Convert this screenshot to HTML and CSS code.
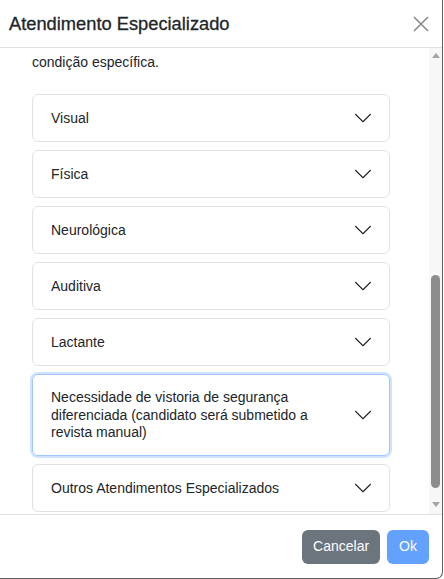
FILE: index.html
```html
<!DOCTYPE html>
<html lang="pt-BR">
<head>
<meta charset="utf-8">
<title>Atendimento Especializado</title>
<link rel="stylesheet" href="styles.css">
</head>
<body>
<div class="modal">
  <header class="modal-header">
    <h5 class="modal-title">Atendimento Especializado</h5>
    <button class="btn-close" type="button" aria-label="Fechar">
      <svg viewBox="0 0 16 16" width="16" height="16"><path d="M1 1L15 15M15 1L1 15" stroke="#212529" stroke-width="1.5" fill="none"/></svg>
    </button>
  </header>
  <div class="modal-main">
    <div class="modal-body">
      <p class="intro">condição específica.</p>
      <div class="accordion">
        <div class="acc-item"><span class="acc-label">Visual</span><svg class="chev" viewBox="0 0 16 16"><path d="M2 5L8 11L14 5"/></svg></div>
        <div class="acc-item"><span class="acc-label">Física</span><svg class="chev" viewBox="0 0 16 16"><path d="M2 5L8 11L14 5"/></svg></div>
        <div class="acc-item"><span class="acc-label">Neurológica</span><svg class="chev" viewBox="0 0 16 16"><path d="M2 5L8 11L14 5"/></svg></div>
        <div class="acc-item"><span class="acc-label">Auditiva</span><svg class="chev" viewBox="0 0 16 16"><path d="M2 5L8 11L14 5"/></svg></div>
        <div class="acc-item"><span class="acc-label">Lactante</span><svg class="chev" viewBox="0 0 16 16"><path d="M2 5L8 11L14 5"/></svg></div>
        <div class="acc-item focused"><span class="acc-label">Necessidade de vistoria de segurança diferenciada (candidato será submetido a revista manual)</span><svg class="chev" viewBox="0 0 16 16"><path d="M2 5L8 11L14 5"/></svg></div>
        <div class="acc-item"><span class="acc-label">Outros Atendimentos Especializados</span><svg class="chev" viewBox="0 0 16 16"><path d="M2 5L8 11L14 5"/></svg></div>
      </div>
    </div>
    <div class="scrollbar">
      <span class="sb-arrow up"></span>
      <div class="sb-track"><div class="sb-thumb"></div></div>
      <span class="sb-arrow down"></span>
    </div>
  </div>
  <footer class="modal-footer">
    <button class="btn btn-secondary" type="button">Cancelar</button>
    <button class="btn btn-primary" type="button" disabled>Ok</button>
  </footer>
</div>
</body>
</html>
```

FILE: styles.css
```css
* { box-sizing: border-box; }
html, body { margin: 0; padding: 0; background: #fff; }
body {
  font-family: "Liberation Sans", Arial, sans-serif;
  color: #212529;
  font-size: 14px;
  line-height: 17.33px;
}
.modal {
  width: 443px;
  height: 579px;
  display: flex;
  flex-direction: column;
  border-right: 1px solid #5f5f5f;
  border-bottom: 1px solid #5f5f5f;
  border-bottom-right-radius: 7px;
  overflow: hidden;
  background: #fff;
}
.modal-header {
  height: 48px;
  flex: none;
  display: flex;
  align-items: center;
  justify-content: space-between;
  padding: 0 13px 0 9px;
  border-bottom: 1px solid #dee2e6;
}
.modal-title {
  margin: 0;
  font-size: 18.3px;
  font-weight: 400;
  line-height: 1.2;
  color: #212529;
  -webkit-text-stroke: 0.3px #212529;
}
.btn-close {
  border: 0;
  background: transparent;
  padding: 0;
  width: 16px;
  height: 16px;
  opacity: .55;
  display: flex;
}
.modal-main {
  height: 466px;
  flex: none;
  display: flex;
}
.modal-body {
  flex: 1;
  min-width: 0;
  overflow: hidden;
  padding: 6px 39px 0 32px;
}
.intro {
  margin: 0 0 23px;
}
.accordion {
  display: flex;
  flex-direction: column;
  gap: 8px;
}
.acc-item {
  display: flex;
  align-items: center;
  gap: 12px;
  border: 1px solid #dee2e6;
  border-radius: 6px;
  padding: 14px 16px 14px 18px;
  min-height: 48px;
}
.acc-item.focused {
  border-color: #9ec5fe;
  box-shadow: 0 0 0 2px rgba(13, 110, 253, .2);
}
.acc-label { flex: 1; }
.chev {
  width: 20px;
  height: 20px;
  margin: -3px 0;
  flex: none;
  fill: none;
  stroke: #212529;
  stroke-width: 0.85;
  stroke-linecap: round;
  stroke-linejoin: round;
}
.scrollbar {
  width: 13px;
  flex: none;
  background: #f7f7f7;
  display: flex;
  flex-direction: column;
  align-items: center;
}
.sb-arrow {
  width: 0;
  height: 0;
  border-left: 4.5px solid transparent;
  border-right: 4.5px solid transparent;
  flex: none;
}
.sb-arrow.up {
  border-bottom: 5px solid #a3a3a3;
  margin-top: 5px;
}
.sb-arrow.down {
  border-top: 5px solid #a3a3a3;
  margin-bottom: 7px;
}
.sb-track {
  flex: 1;
  width: 100%;
  display: flex;
  justify-content: center;
}
.sb-thumb {
  width: 9px;
  height: 213px;
  margin-top: 217px;
  border-radius: 5px;
  background: #8c8c8c;
}
.modal-footer {
  height: 64px;
  flex: none;
  display: flex;
  align-items: center;
  justify-content: flex-end;
  gap: 7px;
  padding: 0 13px 0 0;
  border-top: 1px solid #dee2e6;
}
.btn {
  font-family: inherit;
  font-size: 14px;
  line-height: 1.2;
  height: 34px;
  padding: 0 11px;
  border: 0;
  border-radius: 6px;
  color: #fff;
}
.btn-secondary { background: #6c757d; }
.btn-primary { background: #62a1fe; padding: 0 12px; }
```
